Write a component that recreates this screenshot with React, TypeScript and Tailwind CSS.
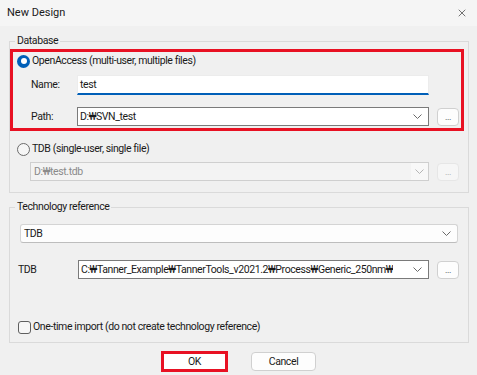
import { X } from "lucide-react";

const Chevron = ({ light = false }: { light?: boolean }) => (
  <svg width="9" height="5" viewBox="0 0 9 5" className="shrink-0">
    <path
      d="M0.5 0.5 L4.5 4.5 L8.5 0.5"
      fill="none"
      stroke={light ? "#b5b5b5" : "#6a6a6a"}
      strokeWidth="1"
    />
  </svg>
);

const Radio = ({ checked }: { checked?: boolean }) =>
  checked ? (
    <span className="flex h-[13px] w-[13px] shrink-0 items-center justify-center rounded-full bg-[#005fb8]">
      <span className="h-[6px] w-[6px] rounded-full bg-white" />
    </span>
  ) : (
    <span className="h-[13px] w-[13px] shrink-0 rounded-full border border-[#6b6b6b] bg-[#f6f6f6]" />
  );

const DotsButton = ({ disabled = false }: { disabled?: boolean }) => (
  <button
    className={`ml-[8px] flex h-[18px] w-[22px] items-end justify-center rounded-[4px] border pb-[3px] text-[9px] leading-none ${
      disabled
        ? "border-[#e6e6e6] bg-[#f6f6f6] text-[#a0a0a0]"
        : "border-[#d0d0d0] bg-[#fdfdfd] text-[#333]"
    }`}
  >
    ...
  </button>
);

export default function App() {
  return (
    <div className="h-[375px] w-[477px] overflow-hidden bg-[#f0f0f0] font-['Roboto',sans-serif] text-[10.5px] text-[#1a1a1a] tracking-[-0.4px]">
      {/* Title bar */}
      <div className="flex h-[26px] items-center justify-between bg-[#f5f5f5] pl-[7px] pr-[9px]">
        <span className="text-[11px] tracking-normal">New Design</span>
        <X size={12} strokeWidth={1.2} className="text-[#1a1a1a]" />
      </div>

      {/* Database */}
      <fieldset className="ml-[9px] mr-[8px] mt-[7px] border border-[#dadada]">
        <legend className="ml-[5px] px-[2px] leading-[16px]">Database</legend>

        <div className="mr-[4px] border-[3px] border-[#e81123] pb-[2px] pl-[4px]">
          <div className="mt-[1px] flex h-[16px] items-center gap-[2px]">
            <Radio checked />
            <span>OpenAccess (multi-user, multiple files)</span>
          </div>

          <div className="mt-[6px] flex items-center">
            <span className="ml-[14px] w-[46px]">Name:</span>
            <div className="flex h-[20px] w-[352px] items-center border border-b-2 border-[#ececec] border-b-[#005fb8] bg-white pl-[2px]">
              test
            </div>
          </div>

          <div className="mt-[12px] flex items-center">
            <span className="ml-[14px] w-[46px]">Path:</span>
            <div className="flex h-[19px] w-[352px] items-center justify-between border border-[#7a7a7a] bg-white pl-[2px] pr-[6px]">
              <span>D:₩SVN_test</span>
              <Chevron />
            </div>
            <DotsButton />
          </div>
        </div>

        <div className="mt-[10px] flex h-[16px] items-center gap-[2px] pl-[7px]">
          <Radio />
          <span>TDB (single-user, single file)</span>
        </div>

        <div className="mt-[5px] flex items-center pb-[11px]">
          <div className="ml-[20px] flex h-[19px] w-[399px] items-center justify-between border border-[#cfcfcf] bg-[#f3f3f3] pl-[3px] text-[#8a8a8a]">
            <span>D:₩test.tdb</span>
            <span className="flex h-full w-[17px] items-center justify-center bg-[#f8f8f8]">
              <Chevron light />
            </span>
          </div>
          <DotsButton disabled />
        </div>
      </fieldset>

      {/* Technology reference */}
      <fieldset className="ml-[9px] mr-[8px] mt-[6px] border border-[#dadada]">
        <legend className="ml-[5px] px-[2px] leading-[16px]">Technology reference</legend>

        <div className="mx-[10px] mt-[9px] flex h-[19px] items-center justify-between rounded-[3px] border border-[#d4d4d4] border-b-[#bdbdbd] bg-[#fdfdfd] pl-[3px] pr-[6px]">
          <span>TDB</span>
          <Chevron />
        </div>

        <div className="mt-[17px] flex items-center">
          <span className="ml-[8px] w-[60px]">TDB</span>
          <div className="flex h-[19px] w-[351px] items-center justify-between gap-[4px] border border-[#7a7a7a] bg-white pl-[2px] pr-[6px]">
            <span className="overflow-hidden whitespace-nowrap">
              C:₩Tanner_Example₩TannerTools_v2021.2₩Process₩Generic_250nm₩
            </span>
            <Chevron />
          </div>
          <DotsButton />
        </div>

        <div className="mt-[40px] box-content flex h-[16px] items-center gap-[2px] pb-[7px] pl-[8px]">
          <span className="h-[13px] w-[13px] shrink-0 rounded-[3px] border border-[#5f5f5f] bg-[#f6f6f6]" />
          <span>One-time import (do not create technology reference)</span>
        </div>
      </fieldset>

      {/* Buttons */}
      <div className="mt-[8px] flex justify-center gap-[23px]">
        <div className="flex h-[21px] w-[67px] items-center justify-center border-[3px] border-[#e81123] bg-white">
          OK
        </div>
        <div className="mt-[1px] flex h-[19px] w-[65px] items-center justify-center rounded-[4px] border border-[#d0d0d0] bg-[#fdfdfd]">
          Cancel
        </div>
      </div>
    </div>
  );
}
